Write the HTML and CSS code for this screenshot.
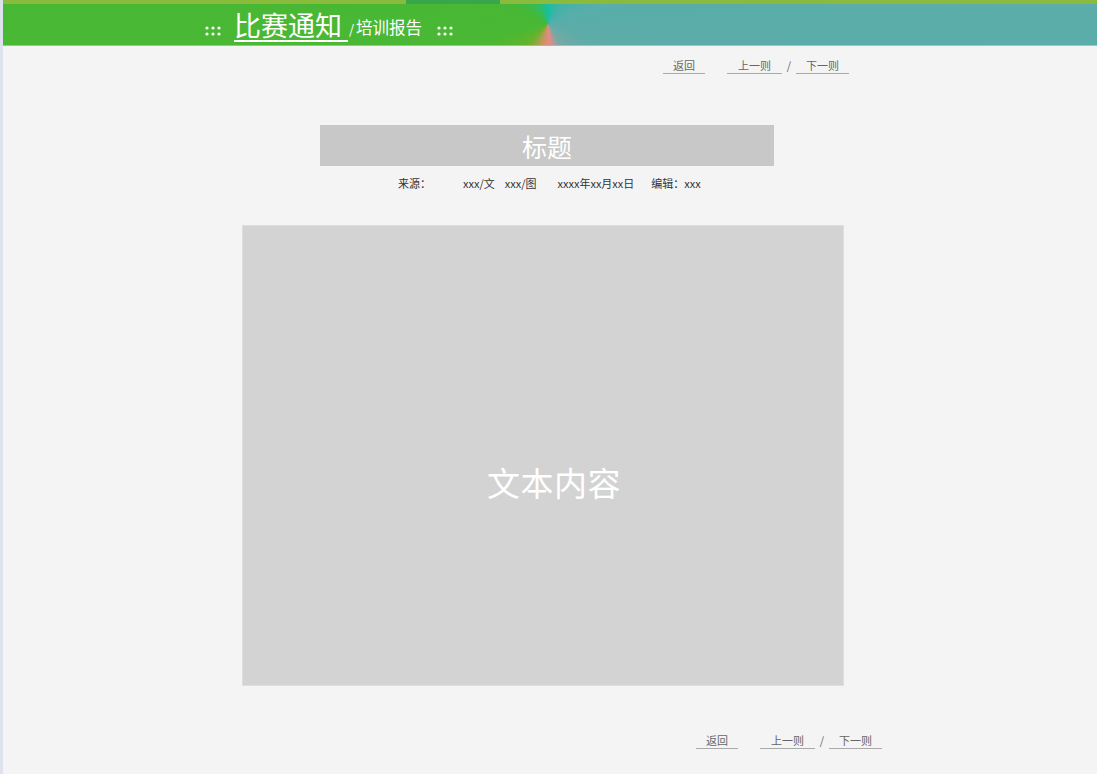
FILE: index.html
```html
<!DOCTYPE html>
<html lang="zh-CN">
<head>
<meta charset="utf-8">
<title>比赛通知</title>
<link rel="stylesheet" href="styles.css">
</head>
<body>
<div class="page">
  <div class="topstrip"><span class="seg-a"></span><span class="seg-b"></span><span class="seg-c"></span></div>
  <header class="header">
    <svg class="dots" width="16" height="10" viewBox="0 0 16 10"><circle cx="2" cy="2" r="1.6"/><circle cx="8" cy="2" r="1.6"/><circle cx="14" cy="2" r="1.6"/><circle cx="2" cy="8" r="1.6"/><circle cx="8" cy="8" r="1.6"/><circle cx="14" cy="8" r="1.6"/></svg>
    <span class="h-title">比赛通知</span>
    <span class="h-sub"><span class="slash">/</span>培训报告</span>
    <svg class="dots dots-r" width="16" height="10" viewBox="0 0 16 10"><circle cx="2" cy="2" r="1.6"/><circle cx="8" cy="2" r="1.6"/><circle cx="14" cy="2" r="1.6"/><circle cx="2" cy="8" r="1.6"/><circle cx="8" cy="8" r="1.6"/><circle cx="14" cy="8" r="1.6"/></svg>
  </header>

  <nav class="links links-top">
    <a class="lk lk-back">返回</a>
    <a class="lk lk-prev">上一则</a>
    <span class="sep">/</span>
    <a class="lk lk-next">下一则</a>
  </nav>

  <div class="title-box">标题</div>

  <div class="meta">
    <span class="m1">来源：</span>
    <span class="m2">xxx/文</span>
    <span class="m3">xxx/图</span>
    <span class="m4">xxxx年xx月xx日</span>
    <span class="m5">编辑：xxx</span>
  </div>

  <div class="content"><span class="content-text">文本内容</span></div>

  <nav class="links links-bottom">
    <a class="lk lk-back">返回</a>
    <a class="lk lk-prev">上一则</a>
    <span class="sep">/</span>
    <a class="lk lk-next">下一则</a>
  </nav>
</div>
</body>
</html>
```

FILE: styles.css
```css
html, body {
  margin: 0;
  padding: 0;
}
body {
  background: #f4f4f4;
  font-family: "Noto Sans CJK SC", "Noto Sans", sans-serif;
  border-left: 3px solid #dde3ec;
  min-height: 774px;
  box-sizing: border-box;
}
.page {
  display: flex;
  flex-direction: column;
  align-items: flex-start;
}
.topstrip {
  display: flex;
  width: 100%;
  height: 4px;
}
.seg-a { width: 403px; background: #8abb3c; }
.seg-b { width: 94px; background: #38a64a; }
.seg-c { flex: 1; background: #8abb3c; }

.header {
  width: 100%;
  height: 42px;
  box-sizing: border-box;
  display: flex;
  align-items: flex-end;
  padding-left: 202px;
  padding-bottom: 3px;
  border-bottom: 1px solid rgba(255, 255, 255, 0.35);
  background: conic-gradient(from 0deg at 545px 20px,
    #18bea2 0deg,
    #3fb3a6 30deg,
    #57aeaa 70deg,
    #5eaca8 110deg,
    #78a8a6 150deg,
    #e98a86 176deg,
    #c89560 196deg,
    #68b22c 225deg,
    #4ab833 255deg,
    #46b836 300deg,
    #34bb5a 330deg,
    #18bea2 360deg);
  color: #fff;
}
.dots {
  fill: #fff;
  margin-bottom: 6px;
  flex: none;
}
.h-title {
  margin-left: 13px;
  font-size: 27px;
  line-height: 30px;
  padding-right: 6px;
  border-bottom: 2px solid #fff;
}
.h-sub {
  font-size: 16.5px;
  line-height: 20px;
  margin-bottom: 3px;
  margin-left: 1px;
}
.slash {
  font-size: 13px;
  margin-right: 2px;
}
.dots-r {
  margin-left: 15px;
}

.links {
  display: flex;
  align-items: flex-end;
  font-size: 11px;
  line-height: 15px;
  color: #666;
}
.links-top {
  margin-top: 12px;
  margin-left: 660px;
}
.links-bottom {
  margin-top: 47px;
  margin-left: 693px;
}
.lk {
  border-bottom: 1px solid #a9a9a9;
  text-align: center;
  color: #666;
}
.lk-back { width: 42px; }
.lk-prev { width: 55px; margin-left: 22px; }
.lk-next { width: 53px; }
.sep {
  width: 14px;
  text-align: center;
  padding-bottom: 1px;
}

.title-box {
  margin-top: 51px;
  margin-left: 317px;
  width: 454px;
  height: 41px;
  background: #c8c8c8;
  color: #fff;
  font-size: 25px;
  line-height: 41px;
  text-align: center;
  box-sizing: border-box;
  padding-top: 1px;
}

.meta {
  margin-top: 9px;
  margin-left: 395px;
  display: flex;
  font-size: 11px;
  line-height: 16px;
  color: #333;
  white-space: nowrap;
}
.m2 { margin-left: 32px; }
.m3 { margin-left: 10px; }
.m4 { margin-left: 21px; }
.m5 { margin-left: 17px; }

.content {
  margin-top: 34px;
  margin-left: 239px;
  width: 602px;
  height: 461px;
  box-sizing: border-box;
  background: #d3d3d3;
  border: 1px solid #dedede;
  padding-top: 236px;
  padding-left: 244px;
}
.content-text {
  color: #fff;
  font-size: 33px;
  line-height: 40px;
  letter-spacing: 0.5px;
}
```
